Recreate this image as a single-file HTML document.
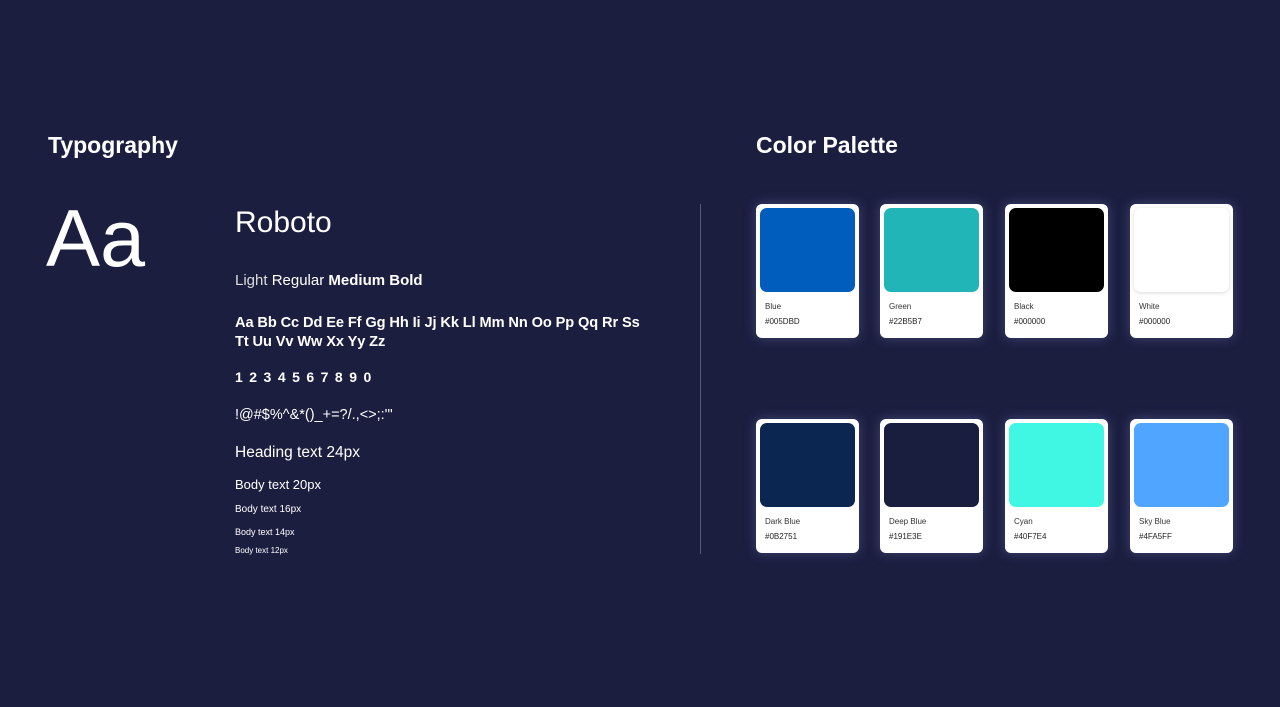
<!DOCTYPE html><html><head><style>
body{margin:0;width:1280px;height:707px;background:#1b1e3f;font-family:"Liberation Sans",sans-serif;color:#fff;position:relative;overflow:hidden}
.a{position:absolute;white-space:nowrap}
.card{position:absolute;width:103px;height:134px;background:#fff;border-radius:6px;box-shadow:0 0 12px rgba(140,150,220,.35)}
.sw{position:absolute;left:4px;top:4px;width:95px;height:84px;border-radius:7px}
.n{position:absolute;left:9px;top:98px;font-size:8px;color:#333}
.h{position:absolute;left:9px;top:113px;font-size:8px;color:#222}
</style></head><body>
<div class="a" style="left:48px;top:132px;font-size:23px;font-weight:bold">Typography</div>
<div class="a" style="left:756px;top:132px;font-size:23px;font-weight:bold">Color Palette</div>
<div class="a" style="left:46px;top:193px;font-size:81px;line-height:92px">Aa</div>
<div class="a" style="left:235px;top:206px;font-size:30px">Roboto</div>
<div class="a" style="left:235px;top:272px;font-size:15px"><span style="color:#ddd">Light</span> Regular <b>Medium Bold</b></div>
<div class="a" style="left:235px;top:314px;font-size:14.6px;line-height:19px;font-weight:bold;letter-spacing:-0.1px">Aa Bb Cc Dd Ee Ff Gg Hh Ii Jj Kk Ll Mm Nn Oo Pp Qq Rr Ss<br>Tt Uu Vv Ww Xx Yy Zz</div>
<div class="a" style="left:235px;top:369px;font-size:14px;font-weight:bold;letter-spacing:1.3px">1 2 3 4 5 6 7 8 9 0</div>
<div class="a" style="left:235px;top:407px;font-size:14.5px">!@#$%^&amp;*()_+=?/.,&lt;&gt;;:'"</div>
<div class="a" style="left:235px;top:444px;font-size:15.5px">Heading text 24px</div>
<div class="a" style="left:235px;top:477px;font-size:13px">Body text 20px</div>
<div class="a" style="left:235px;top:504px;font-size:10px">Body text 16px</div>
<div class="a" style="left:235px;top:527px;font-size:9px">Body text 14px</div>
<div class="a" style="left:235px;top:546px;font-size:8px">Body text 12px</div>
<div class="a" style="left:700px;top:204px;width:1px;height:350px;background:#555a78"></div>

<div class="card" style="left:756px;top:204px"><div class="sw" style="background:#005dbd"></div><div class="n">Blue</div><div class="h">#005DBD</div></div>
<div class="card" style="left:880px;top:204px"><div class="sw" style="background:#22b5b7"></div><div class="n">Green</div><div class="h">#22B5B7</div></div>
<div class="card" style="left:1005px;top:204px"><div class="sw" style="background:#000"></div><div class="n">Black</div><div class="h">#000000</div></div>
<div class="card" style="left:1130px;top:204px"><div class="sw" style="background:#fff;box-shadow:0 1px 4px rgba(0,0,0,.15)"></div><div class="n">White</div><div class="h">#000000</div></div>
<div class="card" style="left:756px;top:419px"><div class="sw" style="background:#0b2751"></div><div class="n">Dark Blue</div><div class="h">#0B2751</div></div>
<div class="card" style="left:880px;top:419px"><div class="sw" style="background:#191e3e"></div><div class="n">Deep Blue</div><div class="h">#191E3E</div></div>
<div class="card" style="left:1005px;top:419px"><div class="sw" style="background:#40f7e4"></div><div class="n">Cyan</div><div class="h">#40F7E4</div></div>
<div class="card" style="left:1130px;top:419px"><div class="sw" style="background:#4fa5ff"></div><div class="n">Sky Blue</div><div class="h">#4FA5FF</div></div>
</body></html>
